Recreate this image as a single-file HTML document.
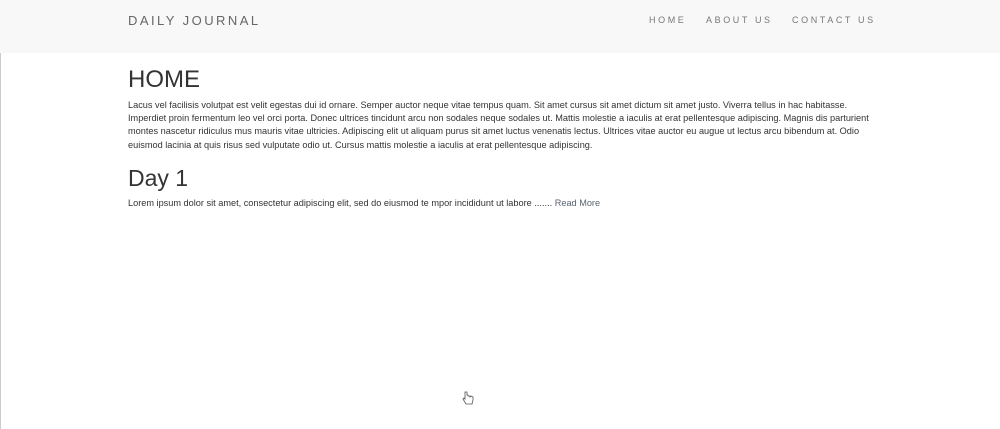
<!DOCTYPE html>
<html><head><meta charset="utf-8"><style>
body{margin:0;width:1000px;height:429px;background:#fff;font-family:"Liberation Sans",Arial,sans-serif;overflow:hidden;position:relative}
.edge{position:absolute;left:0;top:0;width:1px;height:429px;background:#ccc}
.nav{position:absolute;left:0;top:0;width:1000px;height:53px;background:#f8f8f8}
.brand{position:absolute;left:128px;top:13px;font-size:13px;letter-spacing:2.45px;color:#666}
.links{position:absolute;top:15px;font-size:9px;letter-spacing:2.6px;color:#777}
h1{position:absolute;left:128px;top:66px;margin:0;font-weight:400;font-size:24px;color:#333}
h2{position:absolute;left:128px;top:165px;margin:0;font-weight:400;font-size:23px;color:#333}
p{position:absolute;left:128px;margin:0;font-size:9.18px;line-height:13.2px;color:#333;white-space:nowrap}
a{color:#5a6470;text-decoration:none}
</style></head><body>
<div class="nav">
<div class="brand">DAILY JOURNAL</div>
<div class="links" style="left:649px">HOME</div>
<div class="links" style="left:706px">ABOUT US</div>
<div class="links" style="left:792px">CONTACT US</div>
</div>
<div class="edge" style="top:53px;height:376px"></div>
<h1>HOME</h1>
<p style="top:99px">Lacus vel facilisis volutpat est velit egestas dui id ornare. Semper auctor neque vitae tempus quam. Sit amet cursus sit amet dictum sit amet justo. Viverra tellus in hac habitasse.<br>Imperdiet proin fermentum leo vel orci porta. Donec ultrices tincidunt arcu non sodales neque sodales ut. Mattis molestie a iaculis at erat pellentesque adipiscing. Magnis dis parturient<br>montes nascetur ridiculus mus mauris vitae ultricies. Adipiscing elit ut aliquam purus sit amet luctus venenatis lectus. Ultrices vitae auctor eu augue ut lectus arcu bibendum at. Odio<br>euismod lacinia at quis risus sed vulputate odio ut. Cursus mattis molestie a iaculis at erat pellentesque adipiscing.</p>
<h2>Day 1</h2>
<p style="top:197px">Lorem ipsum dolor sit amet, consectetur adipiscing elit, sed do eiusmod te mpor incididunt ut labore ....... <a>Read More</a></p>
<svg style="position:absolute;left:462px;top:391px" width="12" height="14" viewBox="0 0 12 14"><path d="M3 1v7L2 7 1 8l3 5h6l1-4V6l-2-1-1 1V5L6 5V4L5 4V1z" fill="#fff" stroke="#555" stroke-width="0.8"/></svg>
</body></html>
